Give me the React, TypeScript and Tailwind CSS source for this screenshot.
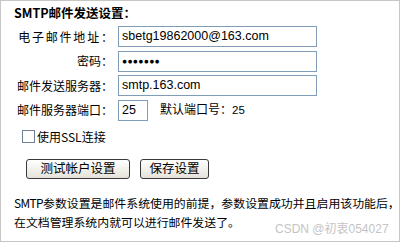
const cjk = "font-['Noto_Sans_CJK_SC',sans-serif]";

function Field({ label, children }: { label: React.ReactNode; children: React.ReactNode }) {
  return (
    <div className="flex items-center h-[21px]">
      <div className="w-[112px] text-right text-[12px] leading-none text-black whitespace-nowrap">{label}</div>
      <div className="ml-[5px] flex items-center">{children}</div>
    </div>
  );
}

function Box({ width, children }: { width: string; children: React.ReactNode }) {
  return (
    <div
      className={`${width} h-[21px] border border-[#7f9db9] bg-white flex items-center pl-[3px] text-[12.5px] text-black font-['Liberation_Sans',sans-serif]`}
    >
      {children}
    </div>
  );
}

export default function App() {
  return (
    <div className={`relative w-[400px] h-[242px] border border-[#c6c6c6] bg-white overflow-hidden ${cjk}`}>
      <div className="ml-[13px] mt-[4px] h-[16px] flex items-center text-[12.5px] font-bold text-black">
        SMTP邮件发送设置：
      </div>

      <div className="mt-[5px] flex flex-col gap-[3.5px]">
        <Field
          label={
            <>
              <span className="tracking-[1.8px]">电子邮件地址</span>：
            </>
          }
        >
          <Box width="w-[199px]">sbetg19862000@163.com</Box>
        </Field>
        <Field label="密码：">
          <Box width="w-[199px]">
            <span className="text-[8.5px] tracking-[0.3px] leading-none">●●●●●●●</span>
          </Box>
        </Field>
        <Field label="邮件发送服务器：">
          <Box width="w-[199px]">smtp.163.com</Box>
        </Field>
        <Field label="邮件服务器端口：">
          <Box width="w-[30px]">25</Box>
          <span className="ml-[12px] text-[12px] text-black leading-none">
            默认端口号：<span className="text-[11.5px] font-['Liberation_Sans',sans-serif]">25</span>
          </span>
        </Field>
      </div>

      <div className="ml-[21px] mt-[9px] flex items-center h-[14px]">
        <span className="w-[13px] h-[13px] border border-[#6f7f94] bg-white" />
        <span className="ml-[2px] text-[12px] text-black leading-none">使用SSL连接</span>
      </div>

      <div className="ml-[25px] mt-[15px] flex gap-[10px]">
        <button
          type="button"
          className="w-[104px] h-[20px] rounded-[3px] border border-[#3a3a3a] bg-gradient-to-b from-white to-[#e4e2d8] text-[12.5px] leading-none text-black"
        >
          测试帐户设置
        </button>
        <button
          type="button"
          className="w-[69px] h-[20px] rounded-[3px] border border-[#3a3a3a] bg-gradient-to-b from-white to-[#e4e2d8] text-[12.5px] leading-none text-black"
        >
          保存设置
        </button>
      </div>

      <div className="ml-[13px] mt-[14px] text-[11.9px] leading-[19px] text-black whitespace-nowrap">
        <div>
          <span className="tracking-[-0.6px]">SMTP</span>参数设置是邮件系统使用的前提，参数设置成功并且启用该功能后，
        </div>
        <div>在文档管理系统内就可以进行邮件发送了。</div>
      </div>

      <div className="absolute left-[274px] top-[222px] text-[12px] leading-none text-[#c4c4c4] font-['Liberation_Sans','Noto_Sans_CJK_SC',sans-serif]">
        CSDN @初衷054027
      </div>
    </div>
  );
}
